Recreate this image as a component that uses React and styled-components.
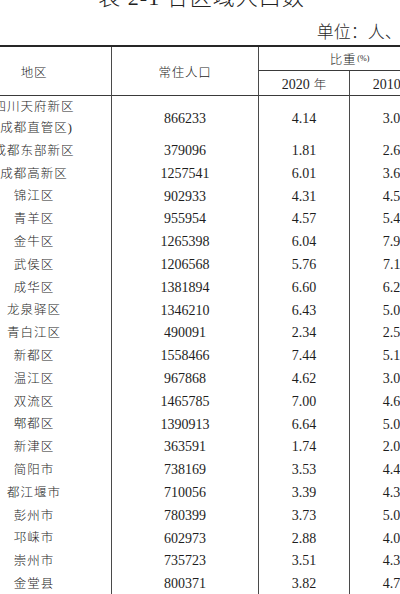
import React from 'react'
import styled, { createGlobalStyle } from 'styled-components'

const rows = [
  { name: ['四川天府新区', '(成都直管区)'], pop: '866233', y2020: '4.14', y2010: '3.04' },
  { name: ['成都东部新区'], pop: '379096', y2020: '1.81', y2010: '2.63' },
  { name: ['成都高新区'], pop: '1257541', y2020: '6.01', y2010: '3.61' },
  { name: ['锦江区'], pop: '902933', y2020: '4.31', y2010: '4.53' },
  { name: ['青羊区'], pop: '955954', y2020: '4.57', y2010: '5.43' },
  { name: ['金牛区'], pop: '1265398', y2020: '6.04', y2010: '7.95' },
  { name: ['武侯区'], pop: '1206568', y2020: '5.76', y2010: '7.11' },
  { name: ['成华区'], pop: '1381894', y2020: '6.60', y2010: '6.22' },
  { name: ['龙泉驿区'], pop: '1346210', y2020: '6.43', y2010: '5.02' },
  { name: ['青白江区'], pop: '490091', y2020: '2.34', y2010: '2.57' },
  { name: ['新都区'], pop: '1558466', y2020: '7.44', y2010: '5.17' },
  { name: ['温江区'], pop: '967868', y2020: '4.62', y2010: '3.01' },
  { name: ['双流区'], pop: '1465785', y2020: '7.00', y2010: '4.62' },
  { name: ['郫都区'], pop: '1390913', y2020: '6.64', y2010: '5.05' },
  { name: ['新津区'], pop: '363591', y2020: '1.74', y2010: '2.04' },
  { name: ['简阳市'], pop: '738169', y2020: '3.53', y2010: '4.42' },
  { name: ['都江堰市'], pop: '710056', y2020: '3.39', y2010: '4.34' },
  { name: ['彭州市'], pop: '780399', y2020: '3.73', y2010: '5.06' },
  { name: ['邛崃市'], pop: '602973', y2020: '2.88', y2010: '4.07' },
  { name: ['崇州市'], pop: '735723', y2020: '3.51', y2010: '4.34' },
  { name: ['金堂县'], pop: '800371', y2020: '3.82', y2010: '4.75' },
]

const GlobalStyle = createGlobalStyle`
  html, body {
    margin: 0;
    padding: 0;
    background: #fff;
  }
  body {
    font-family: "Liberation Serif", "Noto Sans CJK SC", serif;
    color: #1e1e1e;
  }
`

const Page = styled.div`
  width: 400px;
  height: 594px;
  overflow: hidden;
  background: #fff;
`

const Sheet = styled.div`
  width: 483px;
  margin-left: -43px;
  display: flex;
  flex-direction: column;
`

const Title = styled.div`
  margin-top: -13px;
  font-size: 22px;
  line-height: 22px;
  font-weight: 300;
  letter-spacing: 1px;
  text-align: center;
  padding-left: 6px;
  color: #222;
`

const Unit = styled.div`
  margin-top: 14px;
  font-size: 17px;
  line-height: 20px;
  font-weight: 300;
  text-align: right;
  padding-right: 24px;
  color: #2a2a2a;
`

const Table = styled.table`
  margin-top: 2px;
  width: 483px;
  table-layout: fixed;
  border-collapse: separate;
  border-spacing: 0;
  border-top: 2px solid #262626;
`

const Cell = styled.td`
  padding: 0;
  text-align: center;
  vertical-align: middle;
  font-size: ${(p) => (p.$cjk ? '12.5px' : '14px')};
  font-weight: 300;
  letter-spacing: ${(p) => (p.$cjk ? '1px' : '0')};
  line-height: ${(p) => (p.$double ? '21px' : '22.8px')};
  height: ${(p) => (p.$double ? '44px' : '22.8px')};
  border-left: ${(p) => (p.$first ? 'none' : '1px solid #4a4a4a')};
  color: #1e1e1e;
  white-space: nowrap;
`

const HeadCell = styled.th`
  padding: 0;
  font-weight: 300;
  text-align: center;
  vertical-align: middle;
  font-size: 12.5px;
  letter-spacing: 0.8px;
  height: ${(p) => p.$h}px;
  border-left: ${(p) => (p.$first ? 'none' : '1px solid #4a4a4a')};
  border-bottom: 1px solid #3a3a3a;
  color: #1e1e1e;
  white-space: nowrap;
`

const YearCell = styled(HeadCell)`
  font-size: 14px;
  letter-spacing: 0;
`

const Year = styled.span`
  font-size: 12.5px;
  margin-left: 4px;
`

const Sup = styled.span`
  font-size: 8px;
  letter-spacing: 0;
  vertical-align: 3px;
  margin-left: 1px;
`

const NameLine = styled.div`
  line-height: 21px;
`

export default function App() {
  return (
    <Page>
      <GlobalStyle />
      <Sheet>
        <Title>表 2-1 各区域人口数</Title>
        <Unit>单位：人、%</Unit>
        <Table>
          <colgroup>
            <col style={{ width: 154 }} />
            <col style={{ width: 147 }} />
            <col style={{ width: 91 }} />
            <col style={{ width: 91 }} />
          </colgroup>
          <thead>
            <tr>
              <HeadCell $first rowSpan={2} $h={23}>地区</HeadCell>
              <HeadCell rowSpan={2} $h={23}>常住人口</HeadCell>
              <HeadCell colSpan={2} $h={23}>
                比重<Sup>(%)</Sup>
              </HeadCell>
            </tr>
            <tr>
              <YearCell $h={24}>2020<Year>年</Year></YearCell>
              <YearCell $h={24}>2010<Year>年</Year></YearCell>
            </tr>
          </thead>
          <tbody>
            {rows.map((r) => {
              const dbl = r.name.length > 1
              return (
                <tr key={r.name[0]}>
                  <Cell $first $cjk $double={dbl}>
                    {r.name.map((n) => (
                      <NameLine key={n}>{n}</NameLine>
                    ))}
                  </Cell>
                  <Cell $double={dbl}>{r.pop}</Cell>
                  <Cell $double={dbl}>{r.y2020}</Cell>
                  <Cell $double={dbl}>{r.y2010}</Cell>
                </tr>
              )
            })}
          </tbody>
        </Table>
      </Sheet>
    </Page>
  )
}
